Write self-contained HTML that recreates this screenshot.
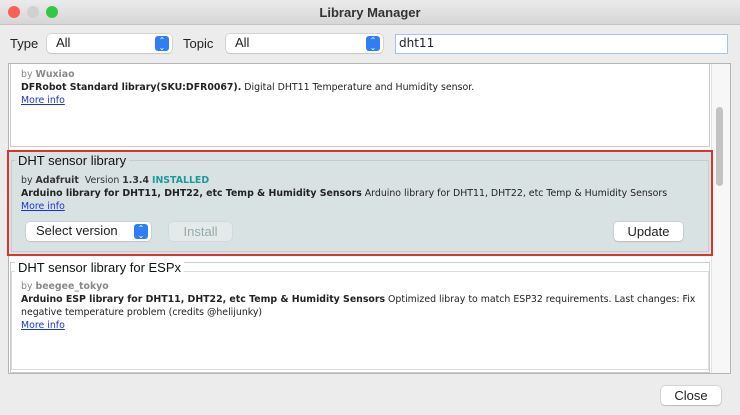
<!DOCTYPE html>
<html><head><style>
*{margin:0;padding:0;box-sizing:border-box}
body{width:740px;height:415px;background:#ececec;font-family:"DejaVu Sans","Liberation Sans",sans-serif;position:relative;overflow:hidden}
.a{position:absolute;white-space:nowrap}
.tb{left:0;top:0;width:740px;height:25px;background:linear-gradient(#ebebeb,#d6d6d6);border-bottom:1px solid #c3c3c3}
.dot{width:12px;height:12px;border-radius:50%;top:6px}
.lbl{font-family:"Liberation Sans",sans-serif;font-size:13px;color:#222}
.sel{background:#fff;border-radius:4px;box-shadow:0 0 0 .5px #bbb,0 1px 1px #ccc;height:19px;font-family:"Liberation Sans",sans-serif;font-size:13px;padding:1px 0 0 9px;color:#222}
.arr{position:absolute;right:3px;top:2px;width:14px;height:15px;border-radius:3px;background:#2f7ef5;color:#fff;font-size:8px;line-height:7px;text-align:center;padding-top:1px}
.t{font-size:9.4px;color:#222}
.b{font-weight:bold}
.g{color:#888}
.lnk{color:#1a33e0;text-decoration:underline;font-size:9.4px}
.h{font-family:"Liberation Sans",sans-serif;font-size:13px;color:#111;background:inherit;padding:0 3px}
.btn{background:#fff;border-radius:4px;box-shadow:0 0 0 .5px #bbb,0 1px 1px #bbb;font-family:"Liberation Sans",sans-serif;font-size:13px;text-align:center;color:#222;height:19px;line-height:19px}
</style></head><body>
<div class="a tb"></div>
<div class="a dot" style="left:8px;background:#fc5f57"></div>
<div class="a dot" style="left:27px;background:#d0d0d0"></div>
<div class="a dot" style="left:46px;background:#33c748"></div>
<div class="a" style="left:0;width:740px;top:5px;text-align:center;font-family:'Liberation Sans',sans-serif;font-size:13px;font-weight:bold;color:#333">Library Manager</div>

<div class="a lbl" style="left:10px;top:36px">Type</div>
<div class="a sel" style="left:47px;top:34px;width:125px">All<div class="arr">⌃<br>⌄</div></div>
<div class="a lbl" style="left:183px;top:36px">Topic</div>
<div class="a sel" style="left:226px;top:34px;width:157px">All<div class="arr">⌃<br>⌄</div></div>
<div class="a" style="left:395px;top:34px;width:333px;height:20px;background:#fff;border:1px solid #a9c3e6;font-family:'DejaVu Sans',sans-serif;font-size:12px;padding:1px 0 0 3px;color:#222">dht11</div>

<div class="a" style="left:8px;top:63px;width:723px;height:311px;background:#fff;border:1px solid #b5b5b5"></div>
<div class="a" style="left:711px;top:64px;width:19px;height:309px;background:#f7f7f7;border-left:1px solid #e4e4e4"></div>
<div class="a" style="left:716px;top:107px;width:7px;height:79px;background:#c3c3c3;border-radius:4px"></div>

<!-- card 1 -->
<div class="a" style="left:10px;top:64px;width:700px;height:83px;border:1px solid #ccc;border-top:none;background:#fff"></div>
<div class="a t g" style="left:21px;top:69px">by <b>Wuxiao</b></div>
<div class="a t" style="left:21px;top:82px"><b>DFRobot Standard library(SKU:DFR0067).</b> Digital DHT11 Temperature and Humidity sensor.</div>
<div class="a lnk" style="left:21px;top:95px">More info</div>

<!-- selected card -->
<div class="a" style="left:7px;top:150px;width:706px;height:106px;border:2px solid #d8352c;background:#d9e2e3"></div>
<div class="a" style="left:11px;top:160px;width:698px;height:92px;border:1px solid #c6cccd"></div>
<div class="a h" style="left:15px;top:153px;background:#d9e2e3">DHT sensor library</div>
<div class="a t" style="left:21px;top:175px;color:#333">by <b>Adafruit</b>&nbsp; Version <b>1.3.4</b> <b style="color:#1a9a9a">INSTALLED</b></div>
<div class="a t" style="left:21px;top:188px"><b>Arduino library for DHT11, DHT22, etc Temp &amp; Humidity Sensors</b> Arduino library for DHT11, DHT22, etc Temp &amp; Humidity Sensors</div>
<div class="a lnk" style="left:21px;top:201px">More info</div>
<div class="a sel" style="left:26px;top:222px;width:125px;font-size:13px;padding-left:10px">Select version<div class="arr">⌃<br>⌄</div></div>
<div class="a btn" style="left:169px;top:222px;width:63px;background:#e4e9ea;color:#9aa;box-shadow:0 0 0 .5px #ccd">Install</div>
<div class="a btn" style="left:614px;top:222px;width:69px">Update</div>

<!-- card 3 -->
<div class="a" style="left:10px;top:262px;width:700px;height:111px;border:1px solid #ccc;background:#fff"></div>
<div class="a" style="left:11px;top:271px;width:698px;height:99px;border:1px solid #ddd"></div>
<div class="a h" style="left:15px;top:260px;background:#fff">DHT sensor library for ESPx</div>
<div class="a t g" style="left:21px;top:281px">by <b>beegee_tokyo</b></div>
<div class="a t" style="left:21px;top:294px"><b>Arduino ESP library for DHT11, DHT22, etc Temp &amp; Humidity Sensors</b> Optimized libray to match ESP32 requirements. Last changes: Fix</div>
<div class="a t" style="left:21px;top:307px">negative temperature problem (credits @helijunky)</div>
<div class="a lnk" style="left:21px;top:320px">More info</div>

<div class="a btn" style="left:661px;top:386px;width:60px">Close</div>
</body></html>
